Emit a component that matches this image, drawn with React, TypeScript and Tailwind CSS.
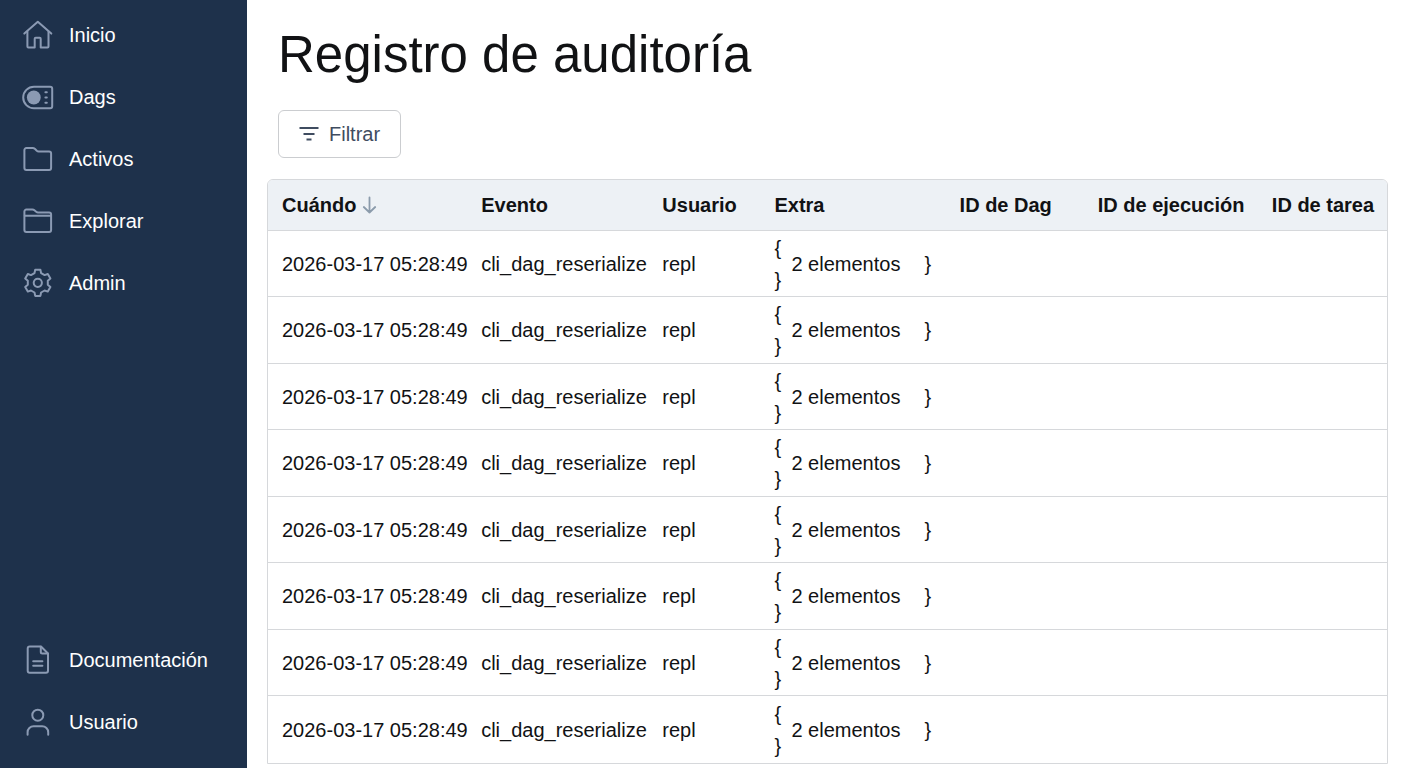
import type { ReactNode } from 'react';

interface NavItem {
  label: string;
  icon: ReactNode;
}

interface AuditLog {
  id: number;
  when: string;
  event: string;
  user: string;
  extraCount: number;
}

const Icon = ({ children }: { children: ReactNode }) => (
  <svg
    viewBox="0 0 32 32"
    className="size-8"
    fill="none"
    stroke="currentColor"
    strokeWidth="2"
    strokeLinecap="round"
    strokeLinejoin="round"
    aria-hidden="true"
  >
    {children}
  </svg>
);

const MAIN_NAV: NavItem[] = [
  {
    label: 'Inicio',
    icon: (
      <Icon>
        <path d="M2.3 14.6 15.8 2.8l13.5 11.8" />
        <path d="M5.4 12.6v15a1 1 0 0 0 1 1h6.3v-8.9a1 1 0 0 1 1-1h4a1 1 0 0 1 1 1v8.9h6.8a1 1 0 0 0 1-1v-15" />
      </Icon>
    ),
  },
  {
    label: 'Dags',
    icon: (
      <Icon>
        <path d="M12 5.7h16.2a2 2 0 0 1 2 2v17.6a2 2 0 0 1-2 2H12a10.8 10.8 0 0 1 0-21.6Z" />
        <circle cx="11.8" cy="16.5" r="6.9" fill="currentColor" stroke="none" />
        <path d="M23.4 11.3h1.4M23.4 16.5h1.4M23.4 21.7h1.4" />
      </Icon>
    ),
  },
  {
    label: 'Activos',
    icon: (
      <Icon>
        <path d="M4.4 5h6.4c.8 0 1.4.3 2 .8l2 1.9c.6.5 1.1.7 1.8.7h10.5a2 2 0 0 1 2 2v14.5a2 2 0 0 1-2 2H4.4a2 2 0 0 1-2-2V7a2 2 0 0 1 2-2Z" />
      </Icon>
    ),
  },
  {
    label: 'Explorar',
    icon: (
      <Icon>
        <path d="M4.4 4.6h6c.8 0 1.4.2 2 .7l1.8 1.5c.6.5 1.1.7 1.8.7h11.1a2 2 0 0 1 2 2v15.4a2 2 0 0 1-2 2H4.4a2 2 0 0 1-2-2V6.6a2 2 0 0 1 2-2Z" />
        <path d="M2.8 10.8h26" />
      </Icon>
    ),
  },
  {
    label: 'Admin',
    icon: (
      <Icon>
        <g transform="translate(15.8 15.8)">
          <path d="M-2.6-13.1H2.6L3.3-9.7 6.8-7.7 10-8.8 12.6-4.300 10-2V2L12.6 4.300 10 8.800 6.800 7.700 3.300 9.700 2.600 13.100H-2.600L-3.300 9.700-6.800 7.700-10 8.800-12.600 4.300-10 2V-2L-12.600-4.300-10-8.800-6.800-7.700-3.300-9.700Z" />
          <circle r="4.1" />
        </g>
      </Icon>
    ),
  },
];

const FOOTER_NAV: NavItem[] = [
  {
    label: 'Documentación',
    icon: (
      <Icon>
        <path d="M7.7 2.5H19l7 7v17.2a2 2 0 0 1-2 2H7.7a2 2 0 0 1-2-2V4.5a2 2 0 0 1 2-2Z" />
        <path d="M18.8 2.8V8a1.5 1.5 0 0 0 1.5 1.5h5.4M11.2 17.3h9.2M11.2 21.7h9.2" />
      </Icon>
    ),
  },
  {
    label: 'Usuario',
    icon: (
      <Icon>
        <circle cx="15.8" cy="9.2" r="5.5" />
        <path d="M5.6 28.8v-2.6a6 6 0 0 1 6-6h8.6a6 6 0 0 1 6 6v2.6" />
      </Icon>
    ),
  },
];

const COLUMNS = [
  { label: 'Cuándo', width: 'w-[199px]', sorted: true },
  { label: 'Evento', width: 'w-[181px]' },
  { label: 'Usuario', width: 'w-[112px]' },
  { label: 'Extra', width: 'w-[185px]' },
  { label: 'ID de Dag', width: 'w-[138px]' },
  { label: 'ID de ejecución', width: 'w-[174px]' },
  { label: 'ID de tarea', width: 'w-[129px]' },
];

const LOGS: AuditLog[] = Array.from({ length: 8 }, (_, id) => ({
  id,
  when: '2026-03-17 05:28:49',
  event: 'cli_dag_reserialize',
  user: 'repl',
  extraCount: 2,
}));

const NavList = ({ items }: { items: NavItem[] }) => (
  <ul>
    {items.map(({ label, icon }) => (
      <li key={label}>
        <a
          href="#"
          className="flex h-[62px] items-center gap-[15px] pl-[22px] text-white"
        >
          <span className="text-[#8b9ab3]">{icon}</span>
          {label}
        </a>
      </li>
    ))}
  </ul>
);

const LogRow = ({ log }: { log: AuditLog }) => (
  <tr className="h-[66px] *:border-b *:border-[#d6d8db] *:pl-[14px] even:h-[67px] last:h-[66px] last:*:border-b-0">
    <td>{log.when}</td>
    <td>{log.event}</td>
    <td>{log.user}</td>
    <td>
      <div className="flex items-center">
        <div className="flex w-[17px] flex-col leading-8">
          <span>{'{'}</span>
          <span>{'}'}</span>
        </div>
        <span className="w-[133px]">{log.extraCount} elementos</span>
        <span>{'}'}</span>
      </div>
    </td>
    <td />
    <td />
    <td />
  </tr>
);

const App = () => {
  return (
    <div className="flex min-h-screen bg-white font-['Liberation_Sans',Arial,sans-serif] text-[20px] leading-6 text-[#111214]">
      <nav className="flex w-[247px] shrink-0 flex-col justify-between bg-[#1e314b] pt-1 pb-[15px]">
        <NavList items={MAIN_NAV} />
        <NavList items={FOOTER_NAV} />
      </nav>

      <main className="min-w-0 flex-1 px-5 pt-[25px]">
        <div className="px-[11px]">
          <h1 className="text-[51px] leading-[60px]">Registro de auditoría</h1>
          <button
            type="button"
            className="mt-[25px] flex h-12 items-center gap-[10px] rounded-md border border-[#cbcdd0] px-5 text-[#3f4c60]"
          >
            <svg
              viewBox="0 0 20 20"
              className="size-5"
              stroke="currentColor"
              strokeWidth="1.8"
              aria-hidden="true"
            >
              <path d="M.5 4h19M4.5 10h11M7.5 15.5h5" />
            </svg>
            Filtrar
          </button>
        </div>

        <div className="mt-[21px] overflow-hidden rounded-t-md border border-[#d6d8db]">
          <table className="w-full table-fixed border-separate border-spacing-0 text-left whitespace-nowrap">
            <thead>
              <tr className="h-[51px] bg-[#edf1f5]">
                {COLUMNS.map(({ label, width, sorted }) => (
                  <th
                    key={label}
                    scope="col"
                    className={`${width} border-b border-[#d6d8db] pl-[14px] font-bold`}
                  >
                    <span className="inline-flex items-center gap-[6px]">
                      {label}
                      {sorted && (
                        <svg
                          viewBox="0 0 16 20"
                          className="h-5 w-4"
                          fill="none"
                          stroke="#8b9bab"
                          strokeWidth="1.8"
                          strokeLinecap="round"
                          strokeLinejoin="round"
                          aria-hidden="true"
                        >
                          <path d="M7.5 2.5v15M1.8 12l5.7 5.5 5.7-5.5" />
                        </svg>
                      )}
                    </span>
                  </th>
                ))}
              </tr>
            </thead>
            <tbody>
              {LOGS.map((log) => (
                <LogRow key={log.id} log={log} />
              ))}
            </tbody>
          </table>
        </div>
      </main>
    </div>
  );
};

export default App;
